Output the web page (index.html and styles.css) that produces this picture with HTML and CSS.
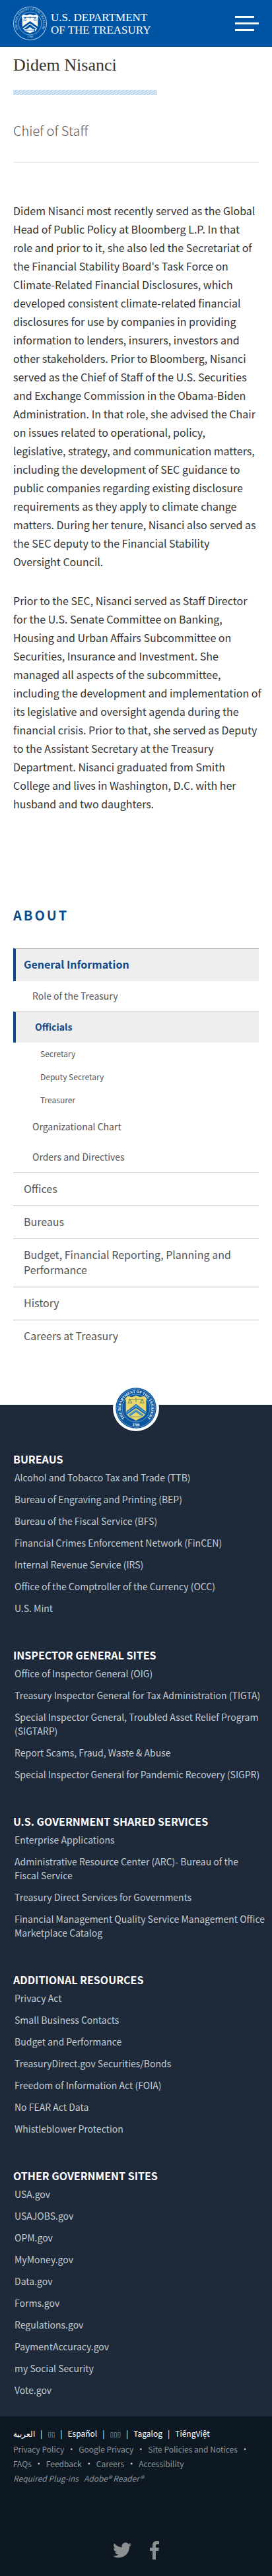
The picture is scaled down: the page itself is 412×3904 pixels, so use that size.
FILE: index.html
```html
<!DOCTYPE html>
<html lang="en">
<head>
<meta charset="utf-8">
<meta name="viewport" content="width=device-width, initial-scale=1">
<title>Didem Nisanci | U.S. Department of the Treasury</title>
<link rel="stylesheet" href="styles.css">
</head>
<body>
<header class="site-header">
  <a class="brand" href="#" aria-label="U.S. Department of the Treasury">
    <svg class="brand-seal" viewBox="0 0 100 100" aria-hidden="true">
      <defs>
        <path id="ring-top" d="M18.700 72.700A39 39 0 1 1 81.300 72.700"/>
        <path id="ring-bottom" d="M27 86A44 44 0 0 0 73 86"/>
      </defs>
      <circle cx="50" cy="50" r="49" fill="none" stroke="#a9c8e6" stroke-width="2"/>
      <circle cx="50" cy="50" r="34" fill="none" stroke="#a9c8e6" stroke-width="1.500"/>
      <text class="seal-text" fill="#cfe1f3"><textPath href="#ring-top" startOffset="50%" text-anchor="middle">THE DEPARTMENT OF THE TREASURY</textPath></text>
      <text class="seal-text" fill="#cfe1f3"><textPath href="#ring-bottom" startOffset="50%" text-anchor="middle">1789</textPath></text>
      <path d="M25 29l5-5 10 2 10-3 10 3 10-2 5 5-2 7v23c0 9-11 15-23 20-12-5-23-11-23-20V36z" fill="#fff"/>
      <path d="M50 43L73 60v6L50 50 27 66v-6zM50 53l18 13-5 4-13-9-13 9-5-4z" fill="#0054a4"/>
      <path d="M31 32h38M50 28v9M35 32l-4 9h8zM65 32l-4 9h8z" fill="none" stroke="#0054a4" stroke-width="1.500"/>
      <path d="M33 70h34" stroke="#fff" stroke-width="6"/>
      <path d="M31 70h33m0-3v6m-33-6v6" stroke="#0054a4" stroke-width="2"/>
    </svg>
    <span class="brand-name">U.S. DEPARTMENT<br>OF THE TREASURY</span>
  </a>
  <button class="menu-button" type="button" aria-label="Menu"><span></span><span></span><span></span></button>
</header>

<main class="content">
  <h1 class="page-title">Didem Nisanci</h1>
  <div class="title-rule"></div>
  <h2 class="role">Chief of Staff</h2>
  <hr class="divider">
  <div class="bio">
    <p>Didem Nisanci most recently served as the Global Head of Public Policy at Bloomberg L.P. In that role and prior to it, she also led the Secretariat of the Financial Stability Board's Task Force on Climate-Related Financial Disclosures, which developed consistent climate-related financial disclosures for use by companies in providing information to lenders, insurers, investors and other stakeholders. Prior to Bloomberg, Nisanci served as the Chief of Staff of the U.S. Securities and Exchange Commission in the Obama-Biden Administration. In that role, she advised the Chair on issues related to operational, policy, legislative, strategy, and communication matters, including the development of SEC guidance to public companies regarding existing disclosure requirements as they apply to climate change matters. During her tenure, Nisanci also served as the SEC deputy to the Financial Stability Oversight Council.</p>
    <p>Prior to the SEC, Nisanci served as Staff Director for the U.S. Senate Committee on Banking, Housing and Urban Affairs Subcommittee on Securities, Insurance and Investment. She managed all aspects of the subcommittee, including the development and implementation of its legislative and oversight agenda during the financial crisis. Prior to that, she served as Deputy to the Assistant Secretary at the Treasury Department. Nisanci graduated from Smith College and lives in Washington, D.C. with her husband and two daughters.</p>
  </div>

  <nav class="about" aria-labelledby="about-title">
    <h2 class="about-title" id="about-title">ABOUT</h2>
    <ul class="menu">
      <li><a class="menu-link is-active" href="#">General Information</a>
        <ul class="menu">
          <li><a class="sub-link" href="#">Role of the Treasury</a></li>
          <li><a class="sub-link is-active" href="#">Officials</a>
            <ul class="menu">
              <li><a class="leaf-link" href="#">Secretary</a></li>
              <li><a class="leaf-link" href="#">Deputy Secretary</a></li>
              <li><a class="leaf-link" href="#">Treasurer</a></li>
            </ul>
          </li>
          <li><a class="sub-link" href="#">Organizational Chart</a></li>
          <li><a class="sub-link" href="#">Orders and Directives</a></li>
        </ul>
      </li>
      <li><a class="menu-link" href="#">Offices</a></li>
      <li><a class="menu-link" href="#">Bureaus</a></li>
      <li><a class="menu-link" href="#">Budget, Financial Reporting, Planning and Performance</a></li>
      <li><a class="menu-link" href="#">History</a></li>
      <li><a class="menu-link" href="#">Careers at Treasury</a></li>
    </ul>
  </nav>
</main>

<footer class="site-footer">
  <div class="footer-links">
    <svg class="footer-seal" viewBox="0 0 100 100" role="img" aria-label="Treasury seal">
      <defs>
        <path id="badge-top" d="M27.900 74.500A33 33 0 1 1 72.100 74.500"/>
        <path id="badge-bottom" d="M30 83.500A39 39 0 0 0 70 83.500"/>
      </defs>
      <circle cx="50" cy="50" r="50" fill="#fff"/>
      <circle cx="50" cy="50" r="44" fill="#0a569f"/>
      <circle cx="50" cy="50" r="41.500" fill="none" stroke="#8fb4d6" stroke-width="1"/>
      <circle cx="50" cy="50" r="30" fill="none" stroke="#8fb4d6" stroke-width="1"/>
      <text class="badge-text" fill="#fff"><textPath href="#badge-top" startOffset="50%" text-anchor="middle">THE DEPARTMENT OF THE TREASURY</textPath></text>
      <text class="badge-text" fill="#fff"><textPath href="#badge-bottom" startOffset="50%" text-anchor="middle">1789</textPath></text>
      <path d="M27 29l5-5 9 2 9-3 9 3 9-2 5 5-1 6v23c0 9-10 13-22 19-12-6-22-10-22-19V35z" fill="#ecd76c"/>
      <path d="M50 41l21 16v8L50 50 29 65v-8z" fill="#176cb5"/>
      <path d="M50 45l20 15" stroke="#cfe3ee" stroke-width="1.500" stroke-dasharray="2 2"/>
      <path d="M50 45L30 60" stroke="#cfe3ee" stroke-width="1.500" stroke-dasharray="2 2"/>
      <path d="M50 53l17 12-4 3-13-9-13 9-4-3z" fill="#4b93bd"/>
      <path d="M34 31h32M50 27v10M37 31l-4 8h8zM63 31l-4 8h8zM38 69h24" fill="none" stroke="#6f8a50" stroke-width="1.500"/>
    </svg>
    <section class="link-group">
      <h3>BUREAUS</h3>
      <ul>
        <li><a href="#">Alcohol and Tobacco Tax and Trade (TTB)</a></li>
        <li><a href="#">Bureau of Engraving and Printing (BEP)</a></li>
        <li><a href="#">Bureau of the Fiscal Service (BFS)</a></li>
        <li><a href="#">Financial Crimes Enforcement Network (FinCEN)</a></li>
        <li><a href="#">Internal Revenue Service (IRS)</a></li>
        <li><a href="#">Office of the Comptroller of the Currency (OCC)</a></li>
        <li><a href="#">U.S. Mint</a></li>
      </ul>
    </section>
    <section class="link-group">
      <h3>INSPECTOR GENERAL SITES</h3>
      <ul>
        <li><a href="#">Office of Inspector General (OIG)</a></li>
        <li><a href="#">Treasury Inspector General for Tax Administration (TIGTA)</a></li>
        <li><a href="#">Special Inspector General, Troubled Asset Relief Program (SIGTARP)</a></li>
        <li><a href="#">Report Scams, Fraud, Waste &amp; Abuse</a></li>
        <li><a href="#">Special Inspector General for Pandemic Recovery (SIGPR)</a></li>
      </ul>
    </section>
    <section class="link-group">
      <h3>U.S. GOVERNMENT SHARED SERVICES</h3>
      <ul>
        <li><a href="#">Enterprise Applications</a></li>
        <li><a href="#">Administrative Resource Center (ARC)- Bureau of the Fiscal&nbsp;Service</a></li>
        <li><a href="#">Treasury Direct Services for Governments</a></li>
        <li><a href="#">Financial Management Quality Service Management Office Marketplace Catalog</a></li>
      </ul>
    </section>
    <section class="link-group">
      <h3>ADDITIONAL RESOURCES</h3>
      <ul>
        <li><a href="#">Privacy Act</a></li>
        <li><a href="#">Small Business Contacts</a></li>
        <li><a href="#">Budget and Performance</a></li>
        <li><a href="#">TreasuryDirect.gov Securities/Bonds</a></li>
        <li><a href="#">Freedom of Information Act (FOIA)</a></li>
        <li><a href="#">No FEAR Act Data</a></li>
        <li><a href="#">Whistleblower Protection</a></li>
      </ul>
    </section>
    <section class="link-group">
      <h3>OTHER GOVERNMENT SITES</h3>
      <ul>
        <li><a href="#">USA.gov</a></li>
        <li><a href="#">USAJOBS.gov</a></li>
        <li><a href="#">OPM.gov</a></li>
        <li><a href="#">MyMoney.gov</a></li>
        <li><a href="#">Data.gov</a></li>
        <li><a href="#">Forms.gov</a></li>
        <li><a href="#">Regulations.gov</a></li>
        <li><a href="#">PaymentAccuracy.gov</a></li>
        <li><a href="#">my Social Security</a></li>
        <li><a href="#">Vote.gov</a></li>
      </ul>
    </section>
  </div>

  <div class="footer-bottom">
    <ul class="languages">
      <li><a href="#" lang="ar">العربية</a></li>
      <li><a class="boxes" href="#">▯▯</a></li>
      <li><a href="#" lang="es">Español</a></li>
      <li><a class="boxes" href="#">▯▯▯</a></li>
      <li><a href="#" lang="tl">Tagalog</a></li>
      <li><a href="#" lang="vi">TiếngViệt</a></li>
    </ul>
    <ul class="policies">
      <li><a href="#">Privacy Policy</a></li>
      <li><a href="#">Google Privacy</a></li>
      <li><a href="#">Site Policies and Notices</a></li>
      <li><a href="#">FAQs</a></li>
      <li><a href="#">Feedback</a></li>
      <li><a href="#">Careers</a></li>
      <li><a href="#">Accessibility</a></li>
    </ul>
    <p class="plugins"><span>Required Plug-ins</span> <a href="#">Adobe® Reader®</a></p>
    <div class="social">
      <a href="#" aria-label="Twitter"><svg class="twitter" viewBox="0 0 24 20" aria-hidden="true"><path d="M24 2.400a9.800 9.800 0 0 1-2.800.8A4.900 4.900 0 0 0 23.300.5a9.900 9.900 0 0 1-3.100 1.200A4.900 4.900 0 0 0 11.800 6.200 14 14 0 0 1 1.700 1.100a4.900 4.900 0 0 0 1.500 6.600A4.900 4.900 0 0 1 1 7.100a4.900 4.900 0 0 0 3.900 4.900 4.900 4.900 0 0 1-2.200.1 4.900 4.900 0 0 0 4.600 3.400A9.900 9.900 0 0 1 0 17.500a13.900 13.900 0 0 0 7.500 2.200c9.100 0 14.300-7.700 14-14.700A10 10 0 0 0 24 2.400z"/></svg></a>
      <a href="#" aria-label="Facebook"><svg class="facebook" viewBox="0 0 14 28" aria-hidden="true"><path d="M14 .2v4.500h-2.600c-2 0-2.400 1-2.400 2.400V10h4.800l-.6 5H9v13H4V15H0v-5h4V6.600C4 2.500 6.500 0 10.300 0c1.700 0 3.200.1 3.700.2z"/></svg></a>
    </div>
  </div>
</footer>
</body>
</html>
```

FILE: styles.css
```css
* { box-sizing: border-box; }

body {
  margin: 0;
  background: #fff;
  color: #333;
  font-family: "Noto Sans CJK SC", "Noto Sans", sans-serif;
  font-size: 16px;
  line-height: 28px;
}

h1, h2, h3, p, ul { margin: 0; padding: 0; }
ul { list-style: none; }
a { color: inherit; text-decoration: none; }

/* Header */
.site-header {
  display: flex;
  align-items: center;
  justify-content: space-between;
  padding: 10px 20px;
  background: #0054a4;
}
.brand { display: flex; align-items: center; gap: 6px; color: #fff; }
.brand-seal { width: 51px; height: 51px; }
.seal-text { font-family: "Liberation Serif", serif; font-size: 9px; }
.badge-text { font-family: "Liberation Serif", serif; font-size: 8px; font-weight: 700; }
.brand-name {
  font-family: "Liberation Serif", serif;
  font-size: 17px;
  line-height: 19px;
}
.menu-button {
  display: flex;
  flex-direction: column;
  gap: 7px;
  width: 36px;
  padding: 0;
  border: 0;
  background: none;
}
.menu-button span { width: 29px; height: 3px; background: #fff; }
.menu-button span:nth-child(2) { width: 36px; }

/* Page content */
.content { padding: 12px 20px 79px; }
.page-title {
  font-family: "Liberation Serif", serif;
  font-size: 26px;
  font-weight: 400;
  line-height: 32px;
}
.title-rule {
  width: 60%;
  max-width: 218px;
  height: 8px;
  margin-top: 21px;
  background: repeating-linear-gradient(150deg, #a9cbe6 0 1px, #dceaf5 1px 3px);
}
.role {
  margin-top: 38px;
  color: #555;
  font-size: 20px;
  font-weight: 300;
  line-height: 32px;
}
.divider { height: 2px; margin: 31px 0 58px; border: 0; background: #eee; }
.bio p + p { margin: 31px -6px 0 0; }

/* Section menu */
.about-title {
  margin-top: 139px;
  color: #0f4a88;
  font-size: 20px;
  font-weight: 700;
  letter-spacing: 3px;
  line-height: 32px;
}
.about-title + .menu { margin-top: 34px; }
.about .menu a { display: block; color: #555; }
.about .menu-link {
  padding: 12px 16px 14px;
  border-top: 1px solid #bbb;
  font-size: 16px;
  line-height: 23px;
}
.about .sub-link { padding: 11px 29px 13px; font-size: 14px; line-height: 22px; }
.about .leaf-link { padding: 6px 41px 8px; font-size: 12px; line-height: 21px; }
.about .menu .is-active {
  border-top: 1px solid #bbb;
  border-left: 4px solid #0f4a88;
  background: #eee;
  color: #0f4a88;
  font-weight: 700;
}
.about .menu-link.is-active { padding-left: 12px; }

/* Footer */
.footer-links {
  position: relative;
  padding: 70px 8px 17px 20px;
  background: #1e293a;
  color: #c3cdd3;
}
.footer-seal {
  position: absolute;
  top: -30px;
  left: 50%;
  width: 70px;
  height: 70px;
  margin-left: -35px;
}
.link-group + .link-group { margin-top: 48px; }
.link-group h3 { color: #fff; font-size: 16px; font-weight: 700; line-height: 24px; }
.link-group ul { padding: 6px 0 0 2px; font-size: 14px; line-height: 21px; }
.link-group li { margin-bottom: 12px; }

.footer-bottom {
  padding: 15px 20px 27px;
  background: #0d1822;
  color: #8c959b;
  font-size: 12px;
  line-height: 22px;
}
.languages, .policies { display: flex; flex-wrap: wrap; }
.languages { color: #fff; }
.languages li + li::before { content: "|"; margin: 0 8px; }
.boxes { color: #9aa2a8; font-family: "DejaVu Sans", sans-serif; font-size: 10px; }
.policies { margin-right: -10px; }
.policies li:not(:last-child)::after { content: "•"; margin: 0 5px; color: #c3cdd3; }
.plugins { display: flex; gap: 8px; font-style: italic; }
.social { display: flex; align-items: center; justify-content: center; gap: 28px; margin-top: 84px; }
.social a { display: flex; }
.social svg { fill: #8d9090; }
.twitter { width: 28px; height: 26px; }
.facebook { width: 14px; height: 28px; }
```
